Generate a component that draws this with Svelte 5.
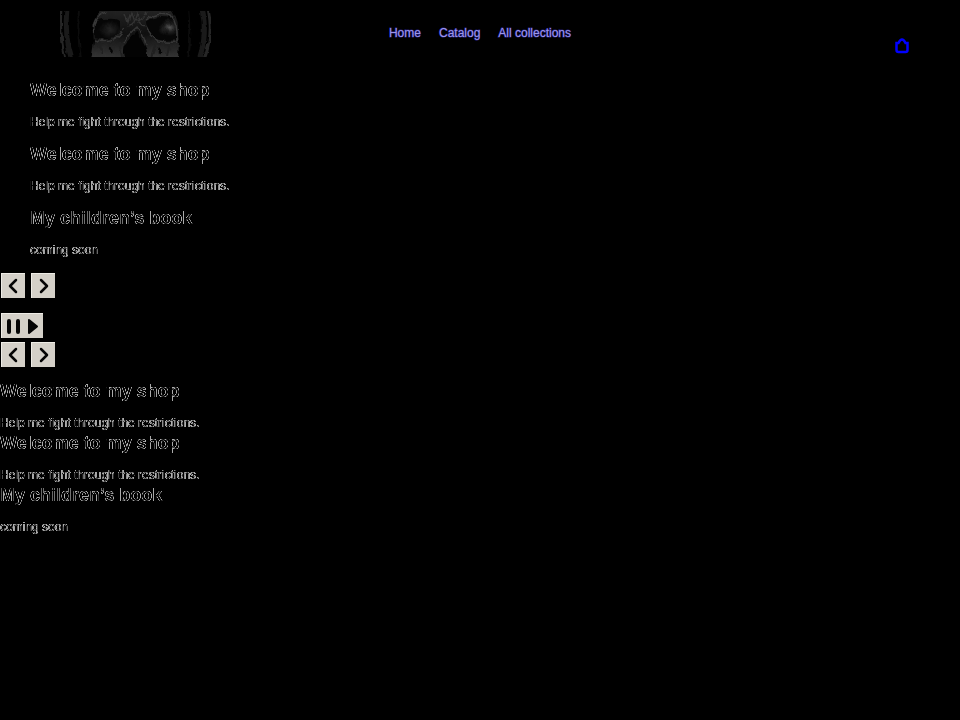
<script>
	const links = ['Home', 'Catalog', 'All collections']

	const slides = [
		{ title: 'Welcome to my shop', text: 'Help me fight through the restrictions.' },
		{ title: 'Welcome to my shop', text: 'Help me fight through the restrictions.' },
		{ title: 'My children’s book', text: 'coming soon' }
	]

	let current = $state(0)
	let paused = $state(false)

	function move(step) {
		current = (current + step + slides.length) % slides.length
	}
</script>

{#snippet slideList(kind)}
	<div class="slides {kind}">
		{#each slides as slide}
			<article>
				<h2>{slide.title}</h2>
				<p>{slide.text}</p>
			</article>
		{/each}
	</div>
{/snippet}

{#snippet arrows()}
	<div class="controls">
		<button aria-label="Previous slide" onclick={() => move(-1)}>
			<svg width="24" height="25" viewBox="0 0 24 25"><path class="line" d="M15 7 9 13l6 6" /></svg>
		</button>
		<button aria-label="Next slide" onclick={() => move(1)}>
			<svg width="24" height="25" viewBox="0 0 24 25"><path class="line" d="m10 7 6 6-6 6" /></svg>
		</button>
	</div>
{/snippet}

<!-- keeps only the half covered edge pixels of the letters -->
<svg class="defs" width="0" height="0" aria-hidden="true">
	<filter id="edge" color-interpolation-filters="sRGB" x="-5%" y="-20%" width="110%" height="140%">
		<feComponentTransfer><feFuncA type="table" tableValues="0 0.7 0.65 0" /></feComponentTransfer>
	</filter>
</svg>

<header>
	<a class="logo" href="#home" aria-label="Skull logo">
		<svg width="156" height="46" viewBox="0 0 156 46">
			<defs>
				<filter id="soft" x="0" y="0" width="100%" height="100%" color-interpolation-filters="sRGB">
					<feTurbulence type="fractalNoise" baseFrequency="0.14 0.09" numOctaves="3" seed="4" result="noise" />
					<feDisplacementMap in="SourceGraphic" in2="noise" scale="5" xChannelSelector="R" yChannelSelector="G" />
					<feGaussianBlur stdDeviation="0.7" />
				</filter>
				<radialGradient id="eye" cx="0.6" cy="0.55">
					<stop offset="0" stop-color="#242424" />
					<stop offset="0.9" stop-color="#060606" />
				</radialGradient>
				<radialGradient id="glow" cx="0.76" cy="0.45">
					<stop offset="0" stop-color="#565656" />
					<stop offset="0.35" stop-color="#202020" />
					<stop offset="0.7" stop-color="#060606" />
				</radialGradient>
				<linearGradient id="bone" x2="0" y2="1">
					<stop offset="0" stop-color="#242424" />
					<stop offset="0.5" stop-color="#101010" />
					<stop offset="1" stop-color="#383838" />
				</linearGradient>
			</defs>
			<g filter="url(#soft)" fill="none">
				<path d="M3-3Q1 23 7 49M150-3q6 26-4 52" stroke="#262626" stroke-width="3" />
				<path d="M9-3Q6 24 14 49M144-3q6 27-3 52" stroke="#1a1a1a" stroke-width="5" />
				<path d="M21-3q-2 26 2 52M131-3q3 26-1 52" stroke="#0c0c0c" stroke-width="2" />
				<path fill="url(#bone)" d="M44-3h68q8 11 8 19l1 15-1 18H33l3-19-2-15Q37 5 44-3Z" />
				<path fill="url(#eye)" d="M37 12q3-5 14-4 9-1 11 4 1 10-5 14-10 4-20 1Z" />
				<path fill="url(#glow)" d="M88 10q12-6 25-3 6 5 6 14v8q-17 2-22-2-9-8-9-17Z" />
				<path fill="#030303" d="M79 20q5 10 9 17 2 7 0 12H67q-4-9 0-16 6-7 12-13Z" />
				<path d="M36 29q14 4 22-2 7-6 8-10M66 32q5-10 13-16 7 8 9 18M88 15q6 12 12 15 9 2 20 1" stroke="#363636" stroke-width="1.5" />
				<path d="M36 22Q33 7 48 1M88 9q12-9 25-4 7 8 6 25" stroke="#3a3a3a" stroke-width="1.5" />
				<path d="m67 3 3 8 3-9 3 9 3-9 3 8 6-8M71 15l7-7 8 8" stroke="#343434" stroke-width="1.5" />
				<path d="M52 37q4 1 2 5M101 37q-2 3 2 4" stroke="#050505" stroke-width="2.5" />
				<path d="m61 30 3 16M98 32l-5 15M40 34l5 9M111 34l-2 12" stroke="#202020" stroke-width="2" />
			</g>
		</svg>
	</a>
	<nav>
		{#each links as link}
			<a href="#{link.toLowerCase().replace(' ', '-')}">{link}</a>
		{/each}
	</nav>
	<a class="cart" href="#cart" aria-label="Cart">
		<svg width="16" height="17" viewBox="0 0 16 17">
			<path d="M2.5 6h2c1-2 2.500-3.500 3.500-3.500S10.500 4 11.500 6h2v7q0 2-2 2h-7q-2 0-2-2Z" />
		</svg>
	</a>
</header>

<main>
	{@render slideList('banner')}
	{@render arrows()}
	<div class="controls play">
		<button class="wide" aria-label="Pause or play slideshow" aria-pressed={paused} onclick={() => (paused = !paused)}>
			<svg width="42" height="25" viewBox="0 0 42 25">
				<path class="bar" d="M8 8v11M17 8v11" />
				<path class="triangle" d="M28 7v13l8-6.500Z" />
			</svg>
		</button>
	</div>
	{@render arrows()}
	{@render slideList('captions')}
</main>

<style>
	:global(body) {
		margin: 0;
		background: #000;
		font-family: 'Liberation Sans', Arial, sans-serif;
		font-size: 12px;
		color: #fff;
	}

	.defs {
		position: absolute;
	}

	svg {
		display: block;
	}

	header {
		display: grid;
		grid-template-columns: 1fr auto 1fr;
		align-items: start;
		padding: 11px 50px 0;
		height: 69px;
		box-sizing: border-box;
	}

	.logo {
		padding-left: 8px;
	}

	nav {
		display: flex;
		gap: 18px;
		padding-top: 12px;
	}

	nav a {
		color: #9c96e8;
		line-height: 20px;
		text-decoration: none;
		-webkit-text-stroke: 1px #2c2488;
		paint-order: stroke;
	}

	.cart {
		justify-self: end;
		padding-top: 26px;
	}

	.cart path {
		fill: none;
		stroke: #00f;
		stroke-width: 2.5;
	}

	.slides {
		display: grid;
	}

	.banner {
		gap: 12px;
		padding: 11px 30px 13px;
	}

	.captions {
		padding-top: 14px;
	}

	h2,
	p {
		margin: 0;
		line-height: 20px;
		filter: url(#edge);
	}

	h2 {
		font-size: 18px;
		font-weight: 700;
		margin-bottom: 12px;
	}

	p {
		font-size: 12px;
	}

	.controls {
		display: flex;
		gap: 6px;
		padding-left: 1px;
	}

	.play {
		padding-top: 15px;
		padding-bottom: 4px;
	}

	button {
		width: 24px;
		height: 25px;
		padding: 0;
		border: 0;
		background: #d4d0c8;
		box-shadow: inset 1px 1px #eeece6;
		cursor: pointer;
	}

	.wide {
		width: 42px;
	}

	.line,
	.bar {
		fill: none;
		stroke: #050505;
		stroke-width: 2.5;
		stroke-linecap: round;
		stroke-linejoin: round;
	}

	.bar {
		stroke-width: 4;
	}

	.triangle {
		fill: #050505;
		stroke: #050505;
		stroke-width: 2;
		stroke-linejoin: round;
	}
</style>
